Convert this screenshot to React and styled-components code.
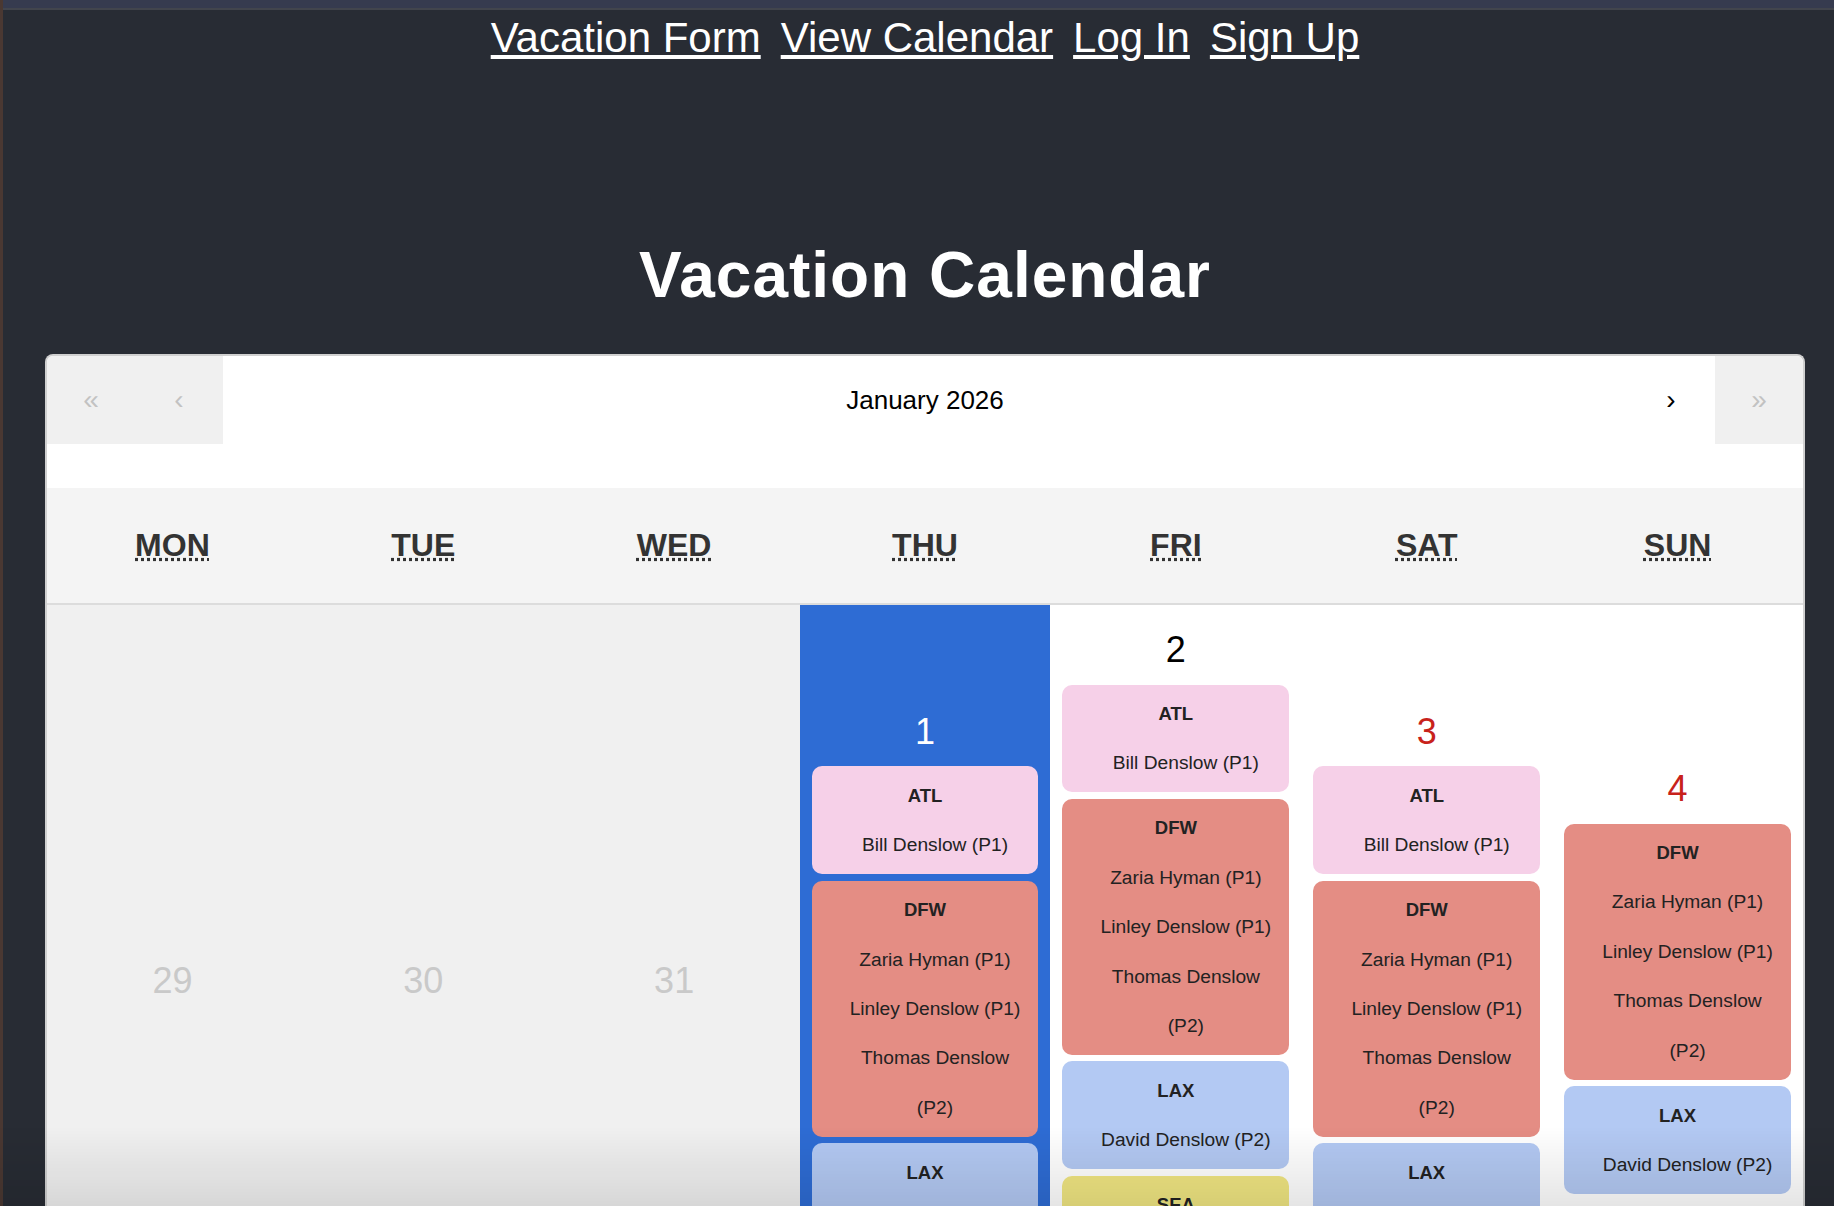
import React from 'react';
import styled, { createGlobalStyle } from 'styled-components';

const GlobalStyle = createGlobalStyle`
  html, body {
    margin: 0;
    padding: 0;
    background: #282c34;
    overflow: hidden;
  }
  body {
    font-family: "Liberation Sans", Arial, Helvetica, sans-serif;
    border-left: 3px solid #4a3832;
    min-height: 100vh;
  }
`;

const TopStrip = styled.div`
  height: 8px;
  background: #363b4f;
  border-bottom: 2px solid #42454d;
`;

const Page = styled.div`
  margin-left: 13px;
`;

const NavBar = styled.nav`
  display: flex;
  justify-content: center;
  gap: 20px;
  padding-top: 4px;
`;

const NavLink = styled.a`
  color: #ffffff;
  font-size: 42px;
  text-decoration: underline;
  cursor: pointer;
`;

const Title = styled.h1`
  margin: 176px 0 42px;
  text-align: center;
  color: #ffffff;
  font-size: 64px;
  letter-spacing: 1px;
  font-weight: bold;
`;

const Calendar = styled.div`
  margin: 0 29px;
  background: #ffffff;
  border: 2px solid #d0d0d0;
  border-bottom: none;
  border-radius: 8px 8px 0 0;
  overflow: hidden;
`;

const Navigation = styled.div`
  display: flex;
  height: 88px;
  margin-bottom: 44px;
`;

const NavButton = styled.button`
  width: 88px;
  border: none;
  padding: 0;
  font-family: inherit;
  font-size: 28px;
  background: ${(p) => (p.disabled ? '#f0f0f0' : '#ffffff')};
  color: ${(p) => (p.disabled ? '#c2c2c2' : '#000000')};
  cursor: ${(p) => (p.disabled ? 'default' : 'pointer')};
`;

const NavLabel = styled.button`
  flex: 1;
  border: none;
  background: #ffffff;
  font-family: inherit;
  font-size: 26px;
  color: #000000;
  padding: 0;
`;

const Weekdays = styled.div`
  display: grid;
  grid-template-columns: repeat(7, 1fr);
  height: 115px;
  background: #f4f4f4;
  border-bottom: 2px solid #dcdcdc;
`;

const Weekday = styled.div`
  display: flex;
  align-items: center;
  justify-content: center;
`;

const WeekdayAbbr = styled.abbr`
  font-size: 32px;
  font-weight: bold;
  color: #333333;
  text-transform: uppercase;
  text-decoration: underline dotted;
  cursor: help;
`;

const Days = styled.div`
  display: grid;
  grid-template-columns: repeat(7, 1fr);
`;

const tileBg = {
  neighbor: '#f0f0f0',
  active: '#2e6cd4',
  weekend: '#ffffff',
  normal: '#ffffff',
};

const numberColor = {
  neighbor: '#c9c9c9',
  active: '#ffffff',
  weekend: '#c8221b',
  normal: '#000000',
};

const Tile = styled.div`
  display: flex;
  flex-direction: column;
  justify-content: center;
  padding: 24px 0;
  background: ${(p) => tileBg[p.$variant]};
`;

const DayNumber = styled.div`
  font-size: 36px;
  line-height: 42px;
  text-align: center;
  color: ${(p) => numberColor[p.$variant]};
`;

const EventList = styled.div`
  display: flex;
  flex-direction: column;
  gap: 6.5px;
  margin: 13.5px 12px 0;
`;

const eventColors = {
  ATL: '#f6d0e8',
  DFW: '#e48d84',
  LAX: '#b3c9f3',
  SEA: '#f0e682',
};

const EventCard = styled.div`
  background: ${(p) => eventColors[p.$code]};
  border-radius: 10px;
  padding: 4.5px 12px;
  line-height: 49.4px;
  color: #222222;
`;

const Code = styled.div`
  font-size: 18.5px;
  font-weight: bold;
  text-align: center;
`;

const PersonList = styled.div`
  padding-left: 20px;
`;

const Person = styled.div`
  font-size: 19.2px;
  text-align: center;
`;

const Fade = styled.div`
  position: fixed;
  left: 0;
  right: 0;
  bottom: 0;
  height: 80px;
  pointer-events: none;
  background: linear-gradient(to bottom, rgba(0, 0, 0, 0), rgba(0, 0, 0, 0.1));
`;

const ATL = { code: 'ATL', people: ['Bill Denslow (P1)'] };
const DFW = {
  code: 'DFW',
  people: ['Zaria Hyman (P1)', 'Linley Denslow (P1)', 'Thomas Denslow (P2)'],
};
const LAX = { code: 'LAX', people: ['David Denslow (P2)'] };
const SEA = { code: 'SEA', people: ['Thomas Denslow (P2)'] };

const weekdays = [
  ['Monday', 'Mon'],
  ['Tuesday', 'Tue'],
  ['Wednesday', 'Wed'],
  ['Thursday', 'Thu'],
  ['Friday', 'Fri'],
  ['Saturday', 'Sat'],
  ['Sunday', 'Sun'],
];

const days = [
  { n: 29, variant: 'neighbor', events: [] },
  { n: 30, variant: 'neighbor', events: [] },
  { n: 31, variant: 'neighbor', events: [] },
  { n: 1, variant: 'active', events: [ATL, DFW, LAX] },
  { n: 2, variant: 'normal', events: [ATL, DFW, LAX, SEA] },
  { n: 3, variant: 'weekend', events: [ATL, DFW, LAX] },
  { n: 4, variant: 'weekend', events: [DFW, LAX] },
];

export default function App() {
  return (
    <>
      <GlobalStyle />
      <TopStrip />
      <Page>
        <NavBar>
          <NavLink>Vacation Form</NavLink>
          <NavLink>View Calendar</NavLink>
          <NavLink>Log In</NavLink>
          <NavLink>Sign Up</NavLink>
        </NavBar>
        <Title>Vacation Calendar</Title>
        <Calendar>
          <Navigation>
            <NavButton disabled>«</NavButton>
            <NavButton disabled>‹</NavButton>
            <NavLabel>January 2026</NavLabel>
            <NavButton>›</NavButton>
            <NavButton disabled>»</NavButton>
          </Navigation>
          <Weekdays>
            {weekdays.map(([full, short]) => (
              <Weekday key={full}>
                <WeekdayAbbr title={full}>{short}</WeekdayAbbr>
              </Weekday>
            ))}
          </Weekdays>
          <Days>
            {days.map((d) => (
              <Tile key={d.n} $variant={d.variant}>
                <DayNumber $variant={d.variant}>{d.n}</DayNumber>
                {d.events.length > 0 && (
                  <EventList>
                    {d.events.map((e) => (
                      <EventCard key={e.code} $code={e.code}>
                        <Code>{e.code}</Code>
                        <PersonList>
                          {e.people.map((p) => (
                            <Person key={p}>{p}</Person>
                          ))}
                        </PersonList>
                      </EventCard>
                    ))}
                  </EventList>
                )}
              </Tile>
            ))}
          </Days>
        </Calendar>
      </Page>
      <Fade />
    </>
  );
}
